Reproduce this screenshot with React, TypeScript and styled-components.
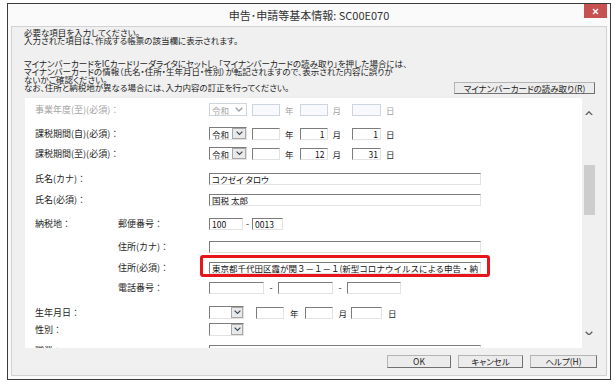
import React from 'react';
import styled, { createGlobalStyle } from 'styled-components';

const GlobalStyle = createGlobalStyle`
  html, body { margin: 0; padding: 0; background: #ffffff; }
  body {
    font-family: "Noto Sans CJK JP", "Noto Sans", sans-serif;
  }
  * { box-sizing: border-box; }
`;

const Window = styled.div`
  margin: 3px 0 0 7px;
  width: 604px;
  height: 377px;
  border: 1px solid #3a3a3a;
  background: #fafafa;
  display: flex;
  flex-direction: column;
`;

const TitleBar = styled.div`
  height: 22px;
  display: grid;
  grid-template-columns: 1fr auto 1fr;
  align-items: start;
`;

const Title = styled.div`
  grid-column: 2;
  font-size: 11px;
  line-height: 22px;
  color: #333333;
  white-space: nowrap;
`;

const CloseButton = styled.div`
  grid-column: 3;
  justify-self: end;
  width: 23px;
  height: 14px;
  margin-right: 3px;
  background: #c75050;
  display: flex;
  align-items: center;
  justify-content: center;
`;

const Client = styled.div`
  flex: 1;
  margin: 0 3px 3px 3px;
  border: 1px solid #d2d2d2;
  background: #f0f0f0;
  padding: 1px 6px 0 12px;
  display: flex;
  flex-direction: column;
  font-size: 9px;
  color: #1e1e1e;
`;

const Intro = styled.div`
  font-size: 8.5px;
  line-height: 8px;
  white-space: nowrap;
  font-feature-settings: "palt";
`;

const Header = styled.div`
  display: flex;
  justify-content: space-between;
  align-items: flex-start;
  margin-top: 15px;
`;

const RaisedButton = styled.div<{ $w: number }>`
  width: ${p => p.$w}px;
  height: 13px;
  background: #ececec;
  border: 1px solid #b4b4b4;
  border-right-color: #707070;
  border-bottom-color: #707070;
  font-size: 8.5px;
  line-height: 11px;
  color: #222;
  text-align: center;
  white-space: nowrap;
  font-feature-settings: "palt";
`;

const CardButton = styled(RaisedButton)`
  margin-top: 23px;
  margin-right: 5px;
  height: 12px;
  line-height: 10px;
`;

const Panel = styled.div`
  margin: 4px 0 0 1px;
  width: 575px;
  height: 250px;
  display: grid;
  grid-template-columns: 1fr 18px;
`;

const FormArea = styled.div`
  background: #ffffff;
  overflow: hidden;
  padding-left: 10px;
  display: flex;
  flex-direction: column;
`;

const ScrollBar = styled.div`
  background: #f0f0f0;
  padding-right: 4px;
  display: flex;
  flex-direction: column;
  align-items: center;
`;

const ArrowBox = styled.div`
  height: 30px;
  width: 100%;
  display: flex;
  align-items: center;
  justify-content: center;
`;

const Track = styled.div`
  flex: 1;
  width: 100%;
  display: flex;
  justify-content: center;
`;

const Thumb = styled.div`
  width: 11px;
  background: #cdcdcd;
`;

const Row = styled.div<{ $mt: number }>`
  margin-top: ${p => p.$mt}px;
  height: 13px;
  flex: none;
  display: flex;
  align-items: center;
`;

const Label = styled.div<{ $w?: number; $disabled?: boolean }>`
  width: ${p => p.$w ?? 174}px;
  flex: none;
  white-space: nowrap;
  color: ${p => (p.$disabled ? '#a3a3a3' : '#1e1e1e')};
`;

const TextBox = styled.div<{ $w: number; $right?: boolean; $disabled?: boolean }>`
  position: relative;
  width: ${p => p.$w}px;
  height: 12px;
  flex: none;
  background: ${p => (p.$disabled ? '#f7f9fc' : '#ffffff')};
  border: 1px solid ${p => (p.$disabled ? '#cdd5df' : '#e2e2e2')};
  ${p => (p.$disabled ? '' : 'border-top-color: #7c7c7c; border-left-color: #7c7c7c;')}
  padding: 0 2px;
  font-size: 8.5px;
  line-height: 10px;
  text-align: ${p => (p.$right ? 'right' : 'left')};
  white-space: nowrap;
  color: #111;
`;

const Clip = styled.div<{ $palt?: boolean }>`
  overflow: hidden;
  white-space: nowrap;
  font-feature-settings: ${p => (p.$palt ? '"palt"' : 'normal')};
`;

const Highlight = styled.div`
  position: absolute;
  left: -10px;
  right: -10px;
  top: -8px;
  bottom: -4px;
  border: 3px solid #e8141c;
  border-radius: 3px;
  pointer-events: none;
`;

const Combo = styled.div<{ $w: number; $disabled?: boolean }>`
  width: ${p => p.$w}px;
  height: 13px;
  flex: none;
  display: flex;
  align-items: center;
  justify-content: space-between;
  background: #ffffff;
  border: 1px solid ${p => (p.$disabled ? '#cdd5df' : '#e2e2e2')};
  ${p => (p.$disabled ? '' : 'border-top-color: #7c7c7c; border-left-color: #7c7c7c;')}
  padding-left: 2px;
  color: ${p => (p.$disabled ? '#a3a3a3' : '#1e1e1e')};
  font-size: 8.5px;
`;

const DropButton = styled.div<{ $w: number; $disabled?: boolean }>`
  width: ${p => p.$w}px;
  height: 11px;
  display: flex;
  align-items: center;
  justify-content: center;
  background: ${p => (p.$disabled ? 'transparent' : '#e9e9e9')};
  border: 1px solid ${p => (p.$disabled ? 'transparent' : '#a8a8a8')};
`;

const Unit = styled.span<{ $ml: number; $mr: number; $disabled?: boolean }>`
  margin: 0 ${p => p.$mr}px 0 ${p => p.$ml}px;
  font-size: 8.5px;
  color: ${p => (p.$disabled ? '#a3a3a3' : '#1e1e1e')};
  white-space: nowrap;
`;

const Dash = styled.span<{ $w: number }>`
  width: ${p => p.$w}px;
  flex: none;
  text-align: center;
`;

const Spacer = styled.span<{ $w: number }>`
  width: ${p => p.$w}px;
  flex: none;
`;

const Footer = styled.div`
  margin-top: 7px;
  display: flex;
  justify-content: flex-end;
  gap: 7px;
  padding-right: 3px;
`;

const Chevron = ({ up, color = '#333', w = 7 }: { up?: boolean; color?: string; w?: number }) => (
  <svg width={w} height={w * 0.6} viewBox="0 0 7 4.2" fill="none">
    <path
      d={up ? 'M0.6 3.6 L3.5 0.7 L6.4 3.6' : 'M0.6 0.6 L3.5 3.5 L6.4 0.6'}
      stroke={color}
      strokeWidth="1.2"
    />
  </svg>
);

const DropDown = ({ text, w, disabled, btn = 14 }: { text?: string; w: number; disabled?: boolean; btn?: number }) => (
  <Combo $w={w} $disabled={disabled}>
    <span>{text ?? ''}</span>
    <DropButton $w={btn} $disabled={disabled}>
      <Chevron color={disabled ? '#9aa3ad' : '#3a4a5a'} w={disabled ? 8 : 7} />
    </DropButton>
  </Combo>
);

const DateFields = ({
  era,
  y,
  m,
  d,
  disabled,
  comboW = 38,
  btn = 14,
  gap = 5,
  birth,
}: {
  era?: string;
  y?: string;
  m?: string;
  d?: string;
  disabled?: boolean;
  comboW?: number;
  btn?: number;
  gap?: number;
  birth?: boolean;
}) => (
  <>
    <DropDown text={era} w={comboW} disabled={disabled} btn={btn} />
    <Spacer $w={gap} />
    <TextBox $w={28} $right $disabled={disabled}>{y}</TextBox>
    <Unit $ml={birth ? 6 : 5} $mr={6} $disabled={disabled}>年</Unit>
    <TextBox $w={28} $right $disabled={disabled}>{m}</TextBox>
    <Unit $ml={birth ? 6 : 5} $mr={birth ? 4 : 11} $disabled={disabled}>月</Unit>
    <TextBox $w={birth ? 31 : 29} $right $disabled={disabled}>{d}</TextBox>
    <Unit $ml={birth ? 6 : 5} $mr={0} $disabled={disabled}>日</Unit>
  </>
);

export default function App() {
  return (
    <>
      <GlobalStyle />
      <Window>
        <TitleBar>
          <Title>申告･申請等基本情報: SC00E070</Title>
          <CloseButton>
            <svg width="7" height="7" viewBox="0 0 7 7">
              <path d="M1 1 L6 6 M6 1 L1 6" stroke="#ffffff" strokeWidth="1.4" />
            </svg>
          </CloseButton>
        </TitleBar>
        <Client>
          <Intro>
            必要な項目を入力してください。
            <br />
            入力された項目は、作成する帳票の該当欄に表示されます。
          </Intro>
          <Header>
            <Intro>
              マイナンバーカードをICカードリーダライタにセットし、「マイナンバーカードの読み取り」を押した場合には、
              <br />
              マイナンバーカードの情報（氏名・住所・生年月日・性別）が転記されますので、表示された内容に誤りが
              <br />
              ないかご確認ください。
              <br />
              なお、住所と納税地が異なる場合には、入力内容の訂正を行ってください。
            </Intro>
            <CardButton $w={141}>マイナンバーカードの読み取り(R)</CardButton>
          </Header>
          <Panel>
            <FormArea>
              <Row $mt={5}>
                <Label $disabled>事業年度(至)(必須)：</Label>
                <DateFields era="令和" disabled />
              </Row>
              <Row $mt={11}>
                <Label>課税期間(自)(必須)：</Label>
                <DateFields era="令和" m="1" d="1" />
              </Row>
              <Row $mt={7}>
                <Label>課税期間(至)(必須)：</Label>
                <DateFields era="令和" m="12" d="31" />
              </Row>
              <Row $mt={12}>
                <Label>氏名(カナ)：</Label>
                <TextBox $w={272}><Clip $palt>コクゼイ タロウ</Clip></TextBox>
              </Row>
              <Row $mt={8}>
                <Label>氏名(必須)：</Label>
                <TextBox $w={272}><Clip $palt>国税 太郎</Clip></TextBox>
              </Row>
              <Row $mt={11}>
                <Label $w={83}>納税地：</Label>
                <Label $w={91}>郵便番号：</Label>
                <TextBox $w={34}>100</TextBox>
                <Dash $w={9}>-</Dash>
                <TextBox $w={31}>0013</TextBox>
              </Row>
              <Row $mt={10}>
                <Label $w={83} />
                <Label $w={91}>住所(カナ)：</Label>
                <TextBox $w={272} />
              </Row>
              <Row $mt={8}>
                <Label $w={83} />
                <Label $w={91}>住所(必須)：</Label>
                <TextBox $w={272}>
                  <Clip>東京都千代田区霞が関３－１－１(新型コロナウイルスによる申告・納付期限延長申請)</Clip>
                  <Highlight />
                </TextBox>
              </Row>
              <Row $mt={7}>
                <Label $w={83} />
                <Label $w={91}>電話番号：</Label>
                <TextBox $w={55} />
                <Dash $w={14}>-</Dash>
                <TextBox $w={55} />
                <Dash $w={14}>-</Dash>
                <TextBox $w={54} />
              </Row>
              <Row $mt={12}>
                <Label>生年月日：</Label>
                <DateFields comboW={35} btn={12} gap={12} birth />
              </Row>
              <Row $mt={4}>
                <Label>性別：</Label>
                <DropDown w={35} btn={12} />
              </Row>
              <Row $mt={8}>
                <Label>職業：</Label>
                <TextBox $w={272} />
              </Row>
            </FormArea>
            <ScrollBar>
              <ArrowBox>
                <Chevron up color="#606060" w={8} />
              </ArrowBox>
              <Track>
                <Thumb style={{ marginTop: 37, height: 50 }} />
              </Track>
              <ArrowBox>
                <Chevron color="#606060" w={8} />
              </ArrowBox>
            </ScrollBar>
          </Panel>
          <Footer>
            <RaisedButton $w={64}>OK</RaisedButton>
            <RaisedButton $w={65}>キャンセル</RaisedButton>
            <RaisedButton $w={67}>ヘルプ(H)</RaisedButton>
          </Footer>
        </Client>
      </Window>
    </>
  );
}
